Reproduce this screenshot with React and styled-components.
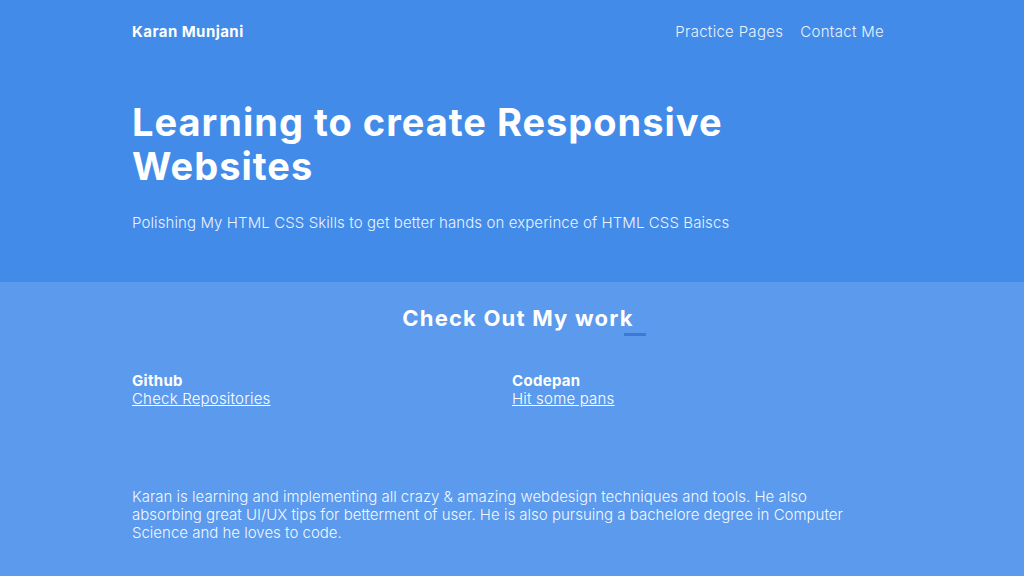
import React from "react";
import styled, { createGlobalStyle } from "styled-components";

const Global = createGlobalStyle`
  html, body { margin: 0; padding: 0; }
  body {
    font-family: Inter, "Open Sans", sans-serif;
    color: #fff;
    background: #5b9aec;
  }
  * { box-sizing: border-box; }
`;

const Container = styled.div`
  width: 760px;
  margin: 0 auto;
`;

const Hero = styled.header`
  background: #428be9;
  height: 282px;
`;

const Nav = styled.nav`
  display: flex;
  justify-content: space-between;
  align-items: center;
  height: 62px;
`;

const Logo = styled.div`
  font-weight: 700;
  font-size: 15px;
  letter-spacing: 0.45px;
`;

const NavLinks = styled.div`
  display: flex;
  gap: 17px;
  padding-right: 8px;
`;

const NavLink = styled.a`
  color: #eaf2fd;
  font-size: 15px;
  font-weight: 300;
  letter-spacing: 0.3px;
  text-decoration: none;
`;

const Title = styled.h1`
  margin: 38px 0 0;
  font-size: 38px;
  line-height: 44px;
  font-weight: 700;
  letter-spacing: 1px;
  max-width: 640px;
`;

const Subtitle = styled.p`
  margin: 25px 0 0;
  font-size: 15px;
  font-weight: 300;
  letter-spacing: 0.1px;
  color: #eaf2fd;
`;

const Work = styled.section`
  padding-top: 22px;
`;

const SectionTitle = styled.h2`
  position: relative;
  width: max-content;
  margin: 0 auto;
  padding-left: 12px;
  font-size: 22px;
  line-height: 28px;
  font-weight: 700;
  letter-spacing: 1.2px;
  &::after {
    content: "";
    position: absolute;
    right: -12px;
    bottom: -4px;
    width: 22px;
    height: 3px;
    background: #3b7ad6;
  }
`;

const Columns = styled.div`
  display: grid;
  grid-template-columns: 380px 1fr;
  margin-top: 40px;
`;

const Col = styled.div`
  display: flex;
  flex-direction: column;
`;

const ColTitle = styled.div`
  font-weight: 700;
  font-size: 15px;
  line-height: 18px;
  letter-spacing: 0.3px;
`;

const ColLink = styled.a`
  color: #fff;
  font-size: 15px;
  line-height: 18px;
  font-weight: 300;
  letter-spacing: 0.2px;
  text-decoration: underline;
  width: max-content;
`;

const About = styled.p`
  margin: 80px 0 0;
  font-size: 15px;
  line-height: 18px;
  font-weight: 300;
  max-width: 740px;
  color: #f3f7fe;
`;

export default function App() {
  return (
    <>
      <Global />
      <Hero>
        <Container>
          <Nav>
            <Logo>Karan Munjani</Logo>
            <NavLinks>
              <NavLink href="#">Practice Pages</NavLink>
              <NavLink href="#">Contact Me</NavLink>
            </NavLinks>
          </Nav>
          <Title>Learning to create Responsive Websites</Title>
          <Subtitle>
            Polishing My HTML CSS Skills to get better hands on experince of HTML CSS Baiscs
          </Subtitle>
        </Container>
      </Hero>
      <Work>
        <Container>
          <SectionTitle>Check Out My work</SectionTitle>
          <Columns>
            <Col>
              <ColTitle>Github</ColTitle>
              <ColLink href="#">Check Repositories</ColLink>
            </Col>
            <Col>
              <ColTitle>Codepan</ColTitle>
              <ColLink href="#">Hit some pans</ColLink>
            </Col>
          </Columns>
          <About>
            Karan is learning and implementing all crazy &amp; amazing webdesign techniques and tools. He also
            absorbing great UI/UX tips for betterment of user. He is also pursuing a bachelore degree in Computer
            Science and he loves to code.
          </About>
        </Container>
      </Work>
    </>
  );
}
